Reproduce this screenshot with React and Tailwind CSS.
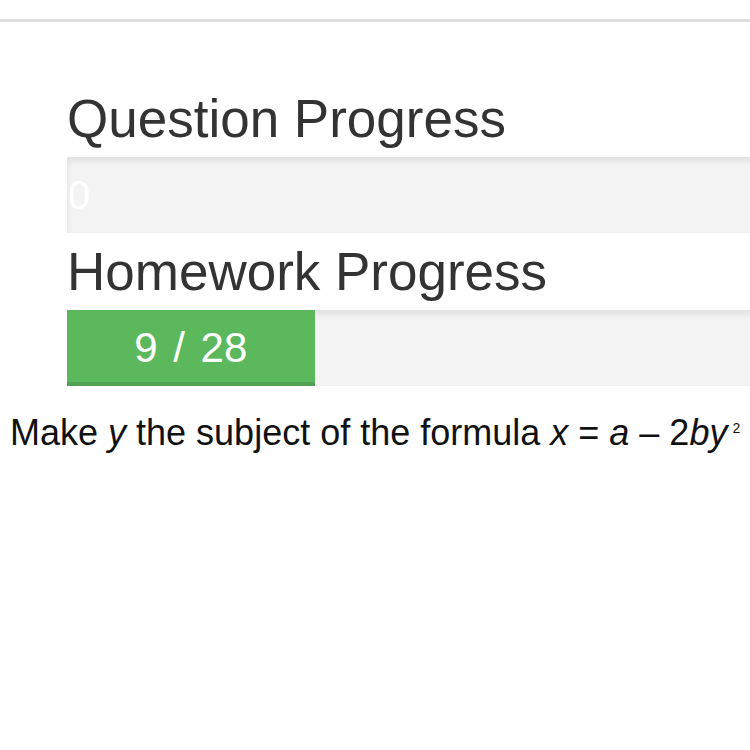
import React from 'react';

const ProgressBar = ({ value, total, label }) => {
  const pct = total ? (value / total) * 100 : 0;
  return (
    <div className="w-[770px] h-[76px] bg-[#f3f3f3] shadow-[inset_0_4px_6px_rgba(0,0,0,0.08)] overflow-hidden">
      <div
        className="h-full bg-[#5cb85c] shadow-[inset_0_-4px_0_rgba(0,0,0,0.12)] text-white text-[42px] leading-[76px] text-center whitespace-nowrap [word-spacing:4px]"
        style={{ width: `${pct}%` }}
      >
        {label}
      </div>
    </div>
  );
};

const App = () => {
  return (
    <div className="w-[750px] h-[750px] bg-white overflow-hidden font-['Liberation_Sans',Arial,sans-serif]">
      <div className="h-[19px]" />
      <div className="h-[3px] bg-[#dedede]" />

      <div className="pl-[67px] pt-[69px]">
        {/* Question Progress */}
        <h2 className="text-[53px] leading-[56px] text-[#333] whitespace-nowrap">Question Progress</h2>
        <div className="mt-[10px] w-[770px] h-[76px] bg-[#f3f3f3] shadow-[inset_0_4px_6px_rgba(0,0,0,0.08)] relative">
          <span className="absolute left-[1px] top-0 text-[40px] leading-[76px] text-white">0</span>
        </div>

        {/* Homework Progress */}
        <h2 className="mt-[11px] text-[53px] leading-[56px] text-[#333] whitespace-nowrap">Homework Progress</h2>
        <div className="mt-[10px]">
          <ProgressBar value={9} total={28} label="9 / 28" />
        </div>
      </div>

      <p className="mt-[27px] pl-[10px] text-[36px] leading-[40px] text-[#111] whitespace-nowrap">
        Make <i>y</i> the subject of the formula <i>x</i> = <i>a</i> – 2<i>by</i>
        <sup className="text-[14px] relative top-[-12px] left-[5px]">2</sup>
      </p>
    </div>
  );
};

export default App;
